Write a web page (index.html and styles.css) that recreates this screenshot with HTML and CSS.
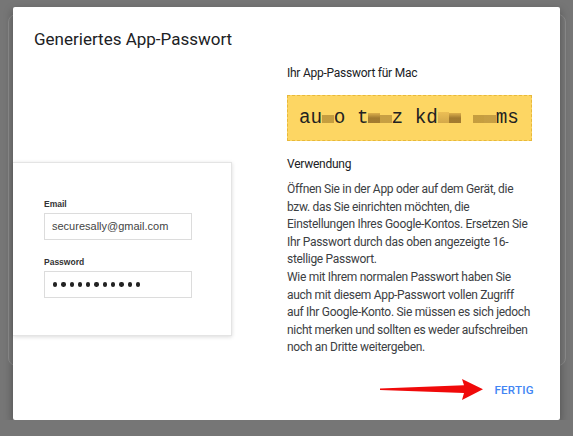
FILE: index.html
```html
<!DOCTYPE html>
<html>
<head>
  <title>Generiertes App-Passwort</title>
  <link rel="stylesheet" href="styles.css">
</head>
<body>
  <div class="backdrop-card"></div>

  <div class="dialog">
    <h1 class="dialog-title">Generiertes App-Passwort</h1>

    <div class="dialog-body">
      <div class="illustration">
        <div class="login-card">
          <label class="field-label">Email</label>
          <div class="field">securesally@gmail.com</div>
          <label class="field-label">Password</label>
          <div class="field dots">
            <span></span><span></span><span></span><span></span><span></span><span></span>
            <span></span><span></span><span></span><span></span><span></span>
          </div>
        </div>
      </div>

      <div class="info">
        <p class="info-heading">Ihr App-Passwort für Mac</p>
        <div class="app-password">au<span class="px px-a">x</span>o t<span class="px px-b">x</span><span class="px px-c">x</span>z kd<span class="px px-d">x</span><span class="px px-b">x</span> <span class="px px-a">x</span><span class="px px-c">x</span>ms</div>
        <p class="info-heading usage">Verwendung</p>
        <p class="usage-text">
          Öffnen Sie in der App oder auf dem Gerät, die bzw. das Sie einrichten möchten, die Einstellungen Ihres Google-Kontos. Ersetzen Sie Ihr Passwort durch das oben angezeigte 16-stellige Passwort.<br>
          Wie mit Ihrem normalen Passwort haben Sie auch mit diesem App-Passwort vollen Zugriff <span class="nowrap">auf Ihr</span> Google-Konto. Sie müssen es sich jedoch nicht merken und sollten es weder aufschreiben noch an Dritte weitergeben.
        </p>
      </div>
    </div>

    <div class="dialog-actions">
      <svg class="arrow" width="104" height="24" viewBox="0 0 104 24">
        <polygon points="0,10.6 84,7.2 82,1 103,11.2 82,22 84,15 0,12" fill="#f00a0a"/>
      </svg>
      <button class="done-button">FERTIG</button>
    </div>
  </div>
</body>
</html>
```

FILE: styles.css
```css
/* Dialog über abgedunkelter Seite */
body {
  margin: 0;
  padding-top: 7px;
  background-color: #767676;
  font-family: Roboto, "Liberation Sans", sans-serif;
  color: #202124;
}

.backdrop-card {
  position: absolute;
  left: 8px;
  top: 14px;
  width: 556px;
  height: 350px;
  border: 1px solid #8c8c8c;
  border-radius: 8px;
  background-color: #7a7a7a;
}

.dialog {
  position: relative;
  margin-left: 13px;
  width: 547px;
  height: 413px;
  background-color: #fff;
  border-radius: 2px;
  box-shadow: 0 4px 10px rgba(0, 0, 0, 0.35);
  display: flex;
  flex-direction: column;
}

.dialog-title {
  margin: 0;
  padding: 20px 0 0 21px;
  font-size: 17px;
  font-weight: 400;
  line-height: 24px;
}

.dialog-body {
  display: flex;
  flex: 1;
}

.illustration {
  width: 274px;
  padding-top: 111px;
}

.login-card {
  width: 219px;
  height: 174px;
  box-sizing: border-box;
  padding: 36px 0 0 31px;
  border: 1px solid #e4e4e4;
  border-left: none;
  box-shadow: 0 1px 4px rgba(0, 0, 0, 0.15);
  font-family: "Liberation Sans", Arial, sans-serif;
}

.field-label {
  display: block;
  font-size: 8.5px;
  font-weight: bold;
  color: #333;
  margin-bottom: 4px;
}

.field {
  width: 148px;
  height: 27px;
  box-sizing: border-box;
  border: 1px solid #dcdcdc;
  padding: 0 7px;
  font-size: 11px;
  line-height: 25px;
  color: #444;
  margin-bottom: 17px;
}

.dots {
  display: flex;
  align-items: center;
  gap: 4px;
  padding-left: 8px;
}

.dots span {
  width: 4.3px;
  height: 4.3px;
  border-radius: 50%;
  background-color: #222;
}

.info {
  width: 248px;
  padding-top: 14px;
}

.info-heading {
  margin: 0;
  font-size: 12px;
  letter-spacing: -0.25px;
  line-height: 16px;
  color: #202124;
}

.app-password {
  margin-top: 14px;
  width: 245px;
  height: 46px;
  box-sizing: border-box;
  border: 1px dashed #e8b93a;
  background-color: #fdd663;
  padding-left: 11px;
  font-family: "Liberation Mono", "Courier New", monospace;
  font-size: 19.3px;
  line-height: 44px;
  color: #222;
  white-space: pre;
}

.px {
  color: transparent;
}

.px-a {
  background: linear-gradient(to bottom, transparent 36%, rgba(160, 120, 40, 0.6) 36%, rgba(160, 120, 40, 0.6) 72%, transparent 72%);
}

.px-b {
  background: linear-gradient(to bottom, transparent 26%, rgba(200, 150, 60, 0.55) 26%, rgba(140, 100, 35, 0.8) 50%, rgba(140, 100, 35, 0.8) 72%, transparent 72%);
}

.px-c {
  background: linear-gradient(to bottom, transparent 36%, rgba(170, 130, 50, 0.65) 36%, rgba(170, 130, 50, 0.65) 72%, transparent 72%);
}

.px-d {
  background: linear-gradient(to bottom, transparent 22%, rgba(225, 175, 75, 0.6) 22%, rgba(190, 145, 60, 0.65) 72%, transparent 72%);
}

.usage {
  margin-top: 15px;
}

.usage-text {
  margin: 9px 0 0;
  font-size: 12px;
  letter-spacing: -0.3px;
  line-height: 17.6px;
  color: #3c4043;
}

.nowrap {
  white-space: nowrap;
}

.dialog-actions {
  display: flex;
  justify-content: flex-end;
  align-items: center;
  padding: 0 22px 18px 0;
}

.arrow {
  margin-right: 6px;
}

.done-button {
  border: none;
  background: none;
  padding: 4px;
  font-family: Roboto, "Liberation Sans", sans-serif;
  font-size: 11.5px;
  font-weight: 500;
  letter-spacing: 0.3px;
  color: #4285f4;
  cursor: pointer;
}
```
